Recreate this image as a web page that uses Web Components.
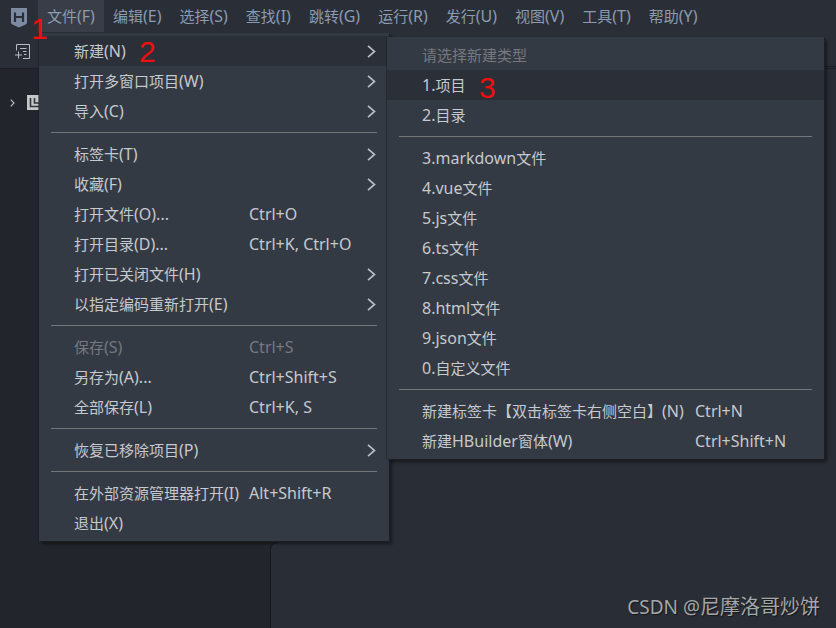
<!DOCTYPE html>
<html lang="zh"><head><meta charset="utf-8"><title>HBuilderX</title>
<style>
html,body{margin:0;padding:0;background:#292d36;overflow:hidden}
body{font:15px/1.2 "Noto Sans","Noto Sans CJK SC",sans-serif}
.la{font-size:16px;line-height:0}
</style></head>
<body>
<ide-app>
  <ide-menubar slot="head">
    <h-logo slot="logo"></h-logo>
    <bar-item active>文件(F)</bar-item><bar-item>编辑(E)</bar-item><bar-item>选择(S)</bar-item><bar-item>查找(I)</bar-item><bar-item>跳转(G)</bar-item><bar-item>运行(R)</bar-item><bar-item>发行(U)</bar-item><bar-item>视图(V)</bar-item><bar-item>工具(T)</bar-item><bar-item>帮助(Y)</bar-item>
  </ide-menubar>
  <ide-toolbar slot="head"></ide-toolbar>
  <ide-sidebar slot="side"></ide-sidebar>
  <ide-main slot="main"></ide-main>

  <pop-menu slot="over" style="left:39px;top:33px;width:350px;--label-w:175px">
    <menu-row active arrow>新建(N)</menu-row>
    <menu-row arrow>打开多窗口项目(W)</menu-row>
    <menu-row arrow>导入(C)</menu-row>
    <menu-sep></menu-sep>
    <menu-row arrow>标签卡(T)</menu-row>
    <menu-row arrow>收藏(F)</menu-row>
    <menu-row>打开文件(O)...<span slot="key">Ctrl+O</span></menu-row>
    <menu-row>打开目录(D)...<span slot="key">Ctrl+K, Ctrl+O</span></menu-row>
    <menu-row arrow>打开已关闭文件(H)</menu-row>
    <menu-row arrow>以指定编码重新打开(E)</menu-row>
    <menu-sep></menu-sep>
    <menu-row disabled>保存(S)<span slot="key">Ctrl+S</span></menu-row>
    <menu-row>另存为(A)...<span slot="key">Ctrl+Shift+S</span></menu-row>
    <menu-row>全部保存(L)<span slot="key">Ctrl+K, S</span></menu-row>
    <menu-sep></menu-sep>
    <menu-row arrow>恢复已移除项目(P)</menu-row>
    <menu-sep></menu-sep>
    <menu-row>在外部资源管理器打开(I)<span slot="key">Alt+Shift+R</span></menu-row>
    <menu-row>退出(X)</menu-row>
  </pop-menu>

  <pop-menu slot="over" style="left:387px;top:37px;width:437px;--label-w:273px">
    <menu-row disabled>请选择新建类型</menu-row>
    <menu-row active>1.项目</menu-row>
    <menu-row>2.目录</menu-row>
    <menu-sep></menu-sep>
    <menu-row>3.markdown文件</menu-row>
    <menu-row>4.vue文件</menu-row>
    <menu-row>5.js文件</menu-row>
    <menu-row>6.ts文件</menu-row>
    <menu-row>7.css文件</menu-row>
    <menu-row>8.html文件</menu-row>
    <menu-row>9.json文件</menu-row>
    <menu-row>0.自定义文件</menu-row>
    <menu-sep></menu-sep>
    <menu-row>新建标签卡【双击标签卡右侧空白】(N)<span slot="key">Ctrl+N</span></menu-row>
    <menu-row>新建HBuilder窗体(W)<span slot="key">Ctrl+Shift+N</span></menu-row>
  </pop-menu>

  <step-mark slot="over" style="left:31px;top:11px;width:16px">1</step-mark>
  <step-mark slot="over" style="left:139px;top:34px">2</step-mark>
  <step-mark slot="over" style="left:479px;top:70px">3</step-mark>
  <water-mark slot="over"></water-mark>
</ide-app>
<script>
function wrapLatin(el){
  [...el.childNodes].forEach(n=>{
    if(n.nodeType!==3) return;
    const f=document.createDocumentFragment();
    n.textContent.split(/([\x21-\x7e]+)/).forEach((s,i)=>{
      if(!s) return;
      if(i%2){const sp=document.createElement('span');sp.className='la';sp.textContent=s;f.append(sp);}
      else f.append(s);
    });
    n.replaceWith(f);
  });
}
function def(name, html, init){
  customElements.define(name, class extends HTMLElement{
    constructor(){super();this.attachShadow({mode:'open'}).innerHTML=html;}
    connectedCallback(){ if(init) init(this); }
  });
}
def('ide-app',`<style>
:host{display:grid;position:relative;width:836px;height:628px;overflow:hidden;grid-template:auto 1fr/271px 1fr;
 color:#c6c9ce;font:15px/1.2 "Noto Sans","Noto Sans CJK SC",sans-serif}
.head{grid-column:1/3;display:flex;flex-direction:column;background:#2a2e37}
.side,.main{display:flex;min-height:0}
</style>
<div class="head"><slot name="head"></slot></div>
<div class="side"><slot name="side"></slot></div>
<div class="main"><slot name="main"></slot></div>
<slot name="over"></slot>`);

def('ide-menubar',`<style>
:host{display:flex;height:33px;align-items:stretch;background:#2a2e37}
.logo{width:38px;display:flex;align-items:center;justify-content:center}
.items{display:flex;height:32px}
</style><div class="logo"><slot name="logo"></slot></div><div class="items"><slot></slot></div>`);

def('h-logo',`<style>:host{display:block;width:16px;height:20px;margin-left:-1px;margin-top:2px}svg{display:block}</style>
<svg width="16" height="20" viewBox="0 0 16 20"><path d="M0 0H16V14.5Q16 16 14.6 16.6L8 19.6L1.4 16.6Q0 16 0 14.5Z" fill="#7c8ba1"/>
<path d="M4 4.5V14M12 4.5V14M4 9H12" fill="none" stroke="#2a2e37" stroke-width="2.2"/></svg>`);

def('bar-item',`<style>
:host{display:flex;align-items:center;padding:0 9px;color:#8b9bb2;white-space:nowrap;font-size:15px}
:host([active]){background:#383d47}
</style><div><slot></slot></div>`, wrapLatin);

def('ide-toolbar',`<style>
:host{display:block;height:36px;box-sizing:border-box;border-bottom:1px solid #1c1f24;background:#2a2e37;position:relative}
.i{display:block;margin:11px 0 0 15px}
.rule{position:absolute;left:271px;right:0;top:33px;height:1px;background:#1c1f24}
</style>
<svg class="i" width="15" height="15" viewBox="0 0 15 15" fill="none" stroke="#b9bcc1" stroke-width="1">
<path d="M1.5 6.5V.5H14.5V14.5H8"/><path d="M5 4.5H11.5M8 7.5H11.5M9 10.5H11.5"/><path d="M0 11H7M3.5 7.5V14.5"/></svg>
<div class="rule"></div>`);

def('ide-sidebar',`<style>
:host{display:block;flex:1;background:#22252c;border-right:1px solid #17191d;box-sizing:border-box}
.row{display:flex;align-items:center;gap:12px;padding:26px 0 0 10px}
.box{width:13px;height:15px;background:#c6c6c6;display:flex;align-items:center;justify-content:center}
</style><div class="row">
<svg width="5" height="8" viewBox="0 0 5 8"><path d="M.7 .6L4 4L.7 7.4" fill="none" stroke="#b5b7ba" stroke-width="1.2"/></svg>
<div class="box"><svg width="13" height="15" viewBox="0 0 13 15"><path d="M3.5 3V11.5H13M7.5 3V8H13" fill="none" stroke="#30343c" stroke-width="1.6"/></svg></div>
</div>`);

def('ide-main',`<style>
:host{display:block;flex:1;background:#292d36;position:relative}
svg{position:absolute;left:-1px;top:472px;display:block}
</style><svg width="14" height="8" viewBox="0 0 14 8"><path d="M0 0H13Q1 .5 .5 8H0Z" fill="#22252c"/><path d="M.5 8Q1 .5 13 0" fill="none" stroke="#17191d"/></svg>`);

def('pop-menu',`<style>
:host{display:block;position:absolute;box-sizing:border-box;padding:3px 0;background:#343a44;
 box-shadow:1px 1px 0 #1c1f24,3px 3px 3px rgba(0,0,0,.45),-1px 0 0 rgba(28,31,36,.55)}
</style><slot></slot>`);

def('menu-row',`<style>
:host{display:flex;align-items:center;height:30px;padding-left:35px;position:relative;color:#c6c9ce;white-space:nowrap}
:host([active]){background:#2b2f38}
:host([disabled]){color:#74787f}
.l{display:block;flex:0 0 var(--label-w)}
.k{font-size:16px;margin-top:2px}
svg{display:none;position:absolute;right:13px;top:9px}
:host([arrow]) svg{display:block}
</style><span class="l"><slot></slot></span><span class="k"><slot name="key"></slot></span>
<svg width="9" height="13" viewBox="0 0 9 13"><path d="M1 .8L7.5 6.5L1 12.2" fill="none" stroke="#b9bcc0" stroke-width="1.7"/></svg>`, wrapLatin);

def('menu-sep',`<style>
:host{display:block;height:13px;padding:6px 12px;box-sizing:border-box}
div{height:1px;background:#74767a}
</style><div></div>`);

def('step-mark',`<style>
:host{display:block;position:absolute;color:#f00e0e;font:30px/36px "Liberation Sans",sans-serif}
</style><slot></slot>`);

def('water-mark',`<style>
:host{display:block;position:absolute;right:16px;top:594px;color:#a4a6a8;white-space:nowrap;font:19px/26px "Noto Sans","Noto Sans CJK SC",sans-serif;text-shadow:1px 1px 1px rgba(0,0,0,.5)}
b{font-weight:400;font-size:20px}
</style>CSDN @<b>尼摩洛哥炒饼</b>`);
</script>
</body></html>
